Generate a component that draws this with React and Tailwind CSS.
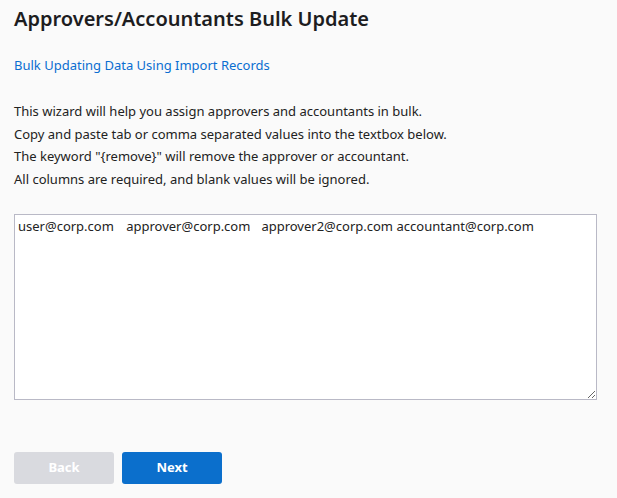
import { useState } from 'react';

export default function App() {
  const [value, setValue] = useState('user@corp.com\tapprover@corp.com\tapprover2@corp.com\taccountant@corp.com');

  return (
    <div className="min-h-[498px] bg-[#fafafa] px-[14px] pt-[4px] text-[#222] font-['Noto_Sans',sans-serif]">
      <h1 className="text-[20px] font-semibold leading-[28px] text-[#1d1d1f] mt-[1px]">Approvers/Accountants Bulk Update</h1>

      <a href="#" className="block mt-[23px] text-[13px] leading-[18px] text-[#0a6ed1]">
        Bulk Updating Data Using Import Records
      </a>

      {/* Instructions */}
      <div className="mt-[26px] text-[13px] leading-[22.5px] text-[#222]">
        <p>This wizard will help you assign approvers and accountants in bulk.</p>
        <p>Copy and paste tab or comma separated values into the textbox below.</p>
        <p>The keyword "{'{remove}'}" will remove the approver or accountant.</p>
        <p>All columns are required, and blank values will be ignored.</p>
      </div>

      <textarea
        value={value}
        onChange={(e) => setValue(e.target.value)}
        className="block mt-[24px] w-[583px] h-[186px] bg-white border border-[#b9b9c6] px-[3px] pt-[2px] pb-[3px] text-[13px] leading-[18px] text-[#222] font-['Noto_Sans',sans-serif] outline-none"
      />

      <div className="flex gap-2 mt-[52px]">
        <button disabled className="w-[100px] h-[32px] rounded-[3px] bg-[#d9dadf] text-white text-[13px] font-bold">
          Back
        </button>
        <button className="w-[100px] h-[32px] rounded-[3px] bg-[#0b6fcc] text-white text-[13px] font-bold">
          Next
        </button>
      </div>
    </div>
  );
}
